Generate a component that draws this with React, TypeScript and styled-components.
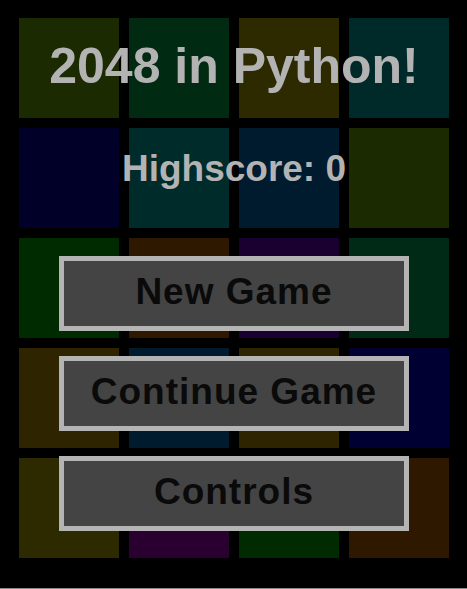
import styled, { createGlobalStyle } from "styled-components";

const GlobalStyle = createGlobalStyle`
  html, body {
    margin: 0;
    padding: 0;
    background: #000;
  }
  body {
    font-family: "Liberation Sans", Arial, sans-serif;
  }
`;

const TILE_COLORS = [
  ["#1b2a00", "#002a12", "#2e2a00", "#002a2a"],
  ["#000028", "#002b2b", "#001a2e", "#1b2a00"],
  ["#002a00", "#2e1800", "#1a0030", "#002a15"],
  ["#2e2400", "#001a2e", "#2e2400", "#000033"],
  ["#2e2a00", "#2a0030", "#002a00", "#2e1800"],
];

const Screen = styled.div`
  width: 467px;
  height: 589px;
  box-sizing: border-box;
  background: #000;
  border-bottom: 1px solid #8a8a8a;
  padding: 18px 18px 0 19px;
`;

const Stage = styled.div`
  display: grid;
  width: 430px;
`;

const Board = styled.div`
  grid-area: 1 / 1;
  display: grid;
  grid-template-columns: repeat(4, 100px);
  grid-auto-rows: 100px;
  gap: 10px;
`;

const Tile = styled.div<{ $color: string }>`
  background: ${(p) => p.$color};
`;

const Menu = styled.div`
  grid-area: 1 / 1;
  display: flex;
  flex-direction: column;
  align-items: center;
  padding-top: 23px;
`;

const Title = styled.h1`
  margin: 0;
  font: 700 50px/50px "Liberation Sans", Arial, sans-serif;
  color: #b3b3b3;
`;

const Highscore = styled.p`
  margin: 59px 0 0;
  font: 700 37px/37px "Liberation Sans", Arial, sans-serif;
  color: #b3b3b3;
`;

const Buttons = styled.div`
  display: flex;
  flex-direction: column;
  gap: 25px;
  margin-top: 69px;
`;

const MenuButton = styled.button`
  width: 350px;
  height: 75px;
  box-sizing: border-box;
  border: 5px solid #b4b4b4;
  background: #444444;
  color: #0a0a0a;
  font: 700 37px/37px "Liberation Sans", Arial, sans-serif;
  letter-spacing: 1px;
  padding: 12px 0 0;
  display: flex;
  justify-content: center;
  align-items: flex-start;
  cursor: pointer;
`;

const App = () => {
  return (
    <>
      <GlobalStyle />
      <Screen>
        <Stage>
          <Board>
            {TILE_COLORS.flat().map((c, i) => (
              <Tile key={i} $color={c} />
            ))}
          </Board>
          <Menu>
            <Title>2048 in Python!</Title>
            <Highscore>Highscore: 0</Highscore>
            <Buttons>
              <MenuButton>New Game</MenuButton>
              <MenuButton>Continue Game</MenuButton>
              <MenuButton>Controls</MenuButton>
            </Buttons>
          </Menu>
        </Stage>
      </Screen>
    </>
  );
};

export default App;
